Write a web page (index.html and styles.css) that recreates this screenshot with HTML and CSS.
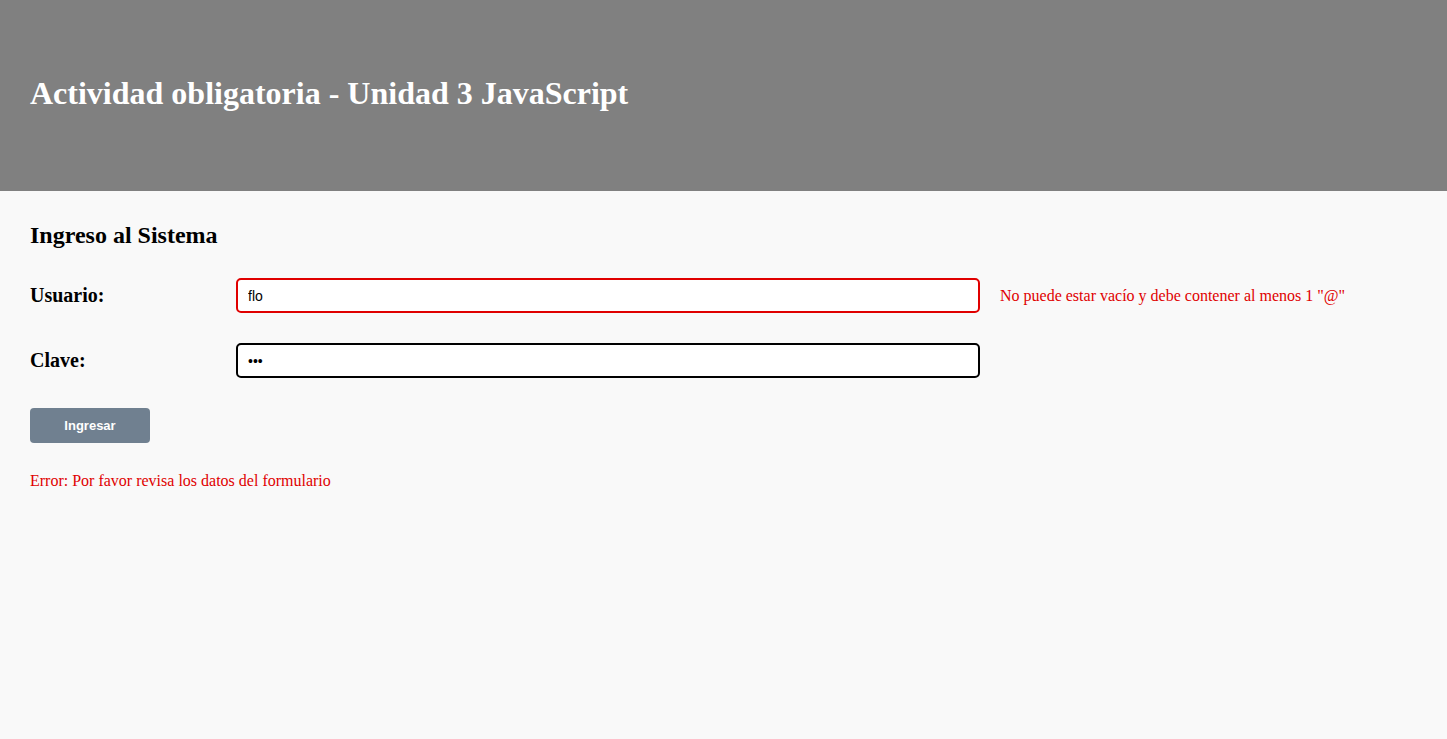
FILE: index.html
```html
<!DOCTYPE html>
<html lang="es">
<head>
<meta charset="utf-8">
<title>Actividad obligatoria - Unidad 3 JavaScript</title>
<link rel="stylesheet" href="styles.css">
</head>
<body>
<header class="header">
  <h1 class="title">Actividad obligatoria - Unidad 3 JavaScript</h1>
</header>
<main class="main">
  <h2 class="subtitle">Ingreso al Sistema</h2>
  <form class="form">
    <div class="row">
      <label class="label" for="usuario">Usuario:</label>
      <input class="input input-error" id="usuario" type="text" value="flo">
      <span class="field-error">No puede estar vacío y debe contener al menos 1 "@"</span>
    </div>
    <div class="row">
      <label class="label" for="clave">Clave:</label>
      <input class="input input-ok" id="clave" type="password" value="abc">
    </div>
    <button class="button" type="button">Ingresar</button>
  </form>
  <p class="form-error">Error: Por favor revisa los datos del formulario</p>
</main>
</body>
</html>
```
FILE: styles.css
```css
html, body {
  margin: 0;
  padding: 0;
}
body {
  background: #f9f9f9;
  font-family: "Liberation Serif", "Times New Roman", serif;
  color: #000;
  min-height: 739px;
}
.header {
  background: #808080;
  height: 191px;
  display: flex;
  align-items: center;
  padding: 0 30px;
  box-sizing: border-box;
}
.title {
  margin: 0;
  color: #fff;
  font-size: 32px;
  font-weight: bold;
  padding-bottom: 4px;
}
.main {
  padding: 20px 30px;
}
.subtitle {
  margin: 10px 0 29px;
  font-size: 24px;
  font-weight: bold;
  line-height: 28px;
}
.form {
  display: flex;
  flex-direction: column;
  align-items: flex-start;
  gap: 30px;
}
.row {
  display: flex;
  align-items: center;
}
.label {
  width: 206px;
  font-size: 20px;
  font-weight: bold;
}
.input {
  width: 744px;
  height: 35px;
  box-sizing: border-box;
  border-radius: 5px;
  border: 2px solid #000;
  background: #fff;
  padding: 0 10px;
  font-family: "Liberation Sans", Arial, sans-serif;
  font-size: 14px;
  outline: none;
}
.input-error {
  border-color: #e00000;
}
.field-error {
  margin-left: 20px;
  color: #e00000;
  font-size: 16px;
}
.button {
  width: 120px;
  height: 35px;
  border: none;
  border-radius: 4px;
  background: #708090;
  color: #fff;
  font-family: "Liberation Sans", Arial, sans-serif;
  font-size: 13px;
  font-weight: bold;
}
.form-error {
  margin: 29px 0 0;
  color: #e00000;
  font-size: 16px;
}
```
